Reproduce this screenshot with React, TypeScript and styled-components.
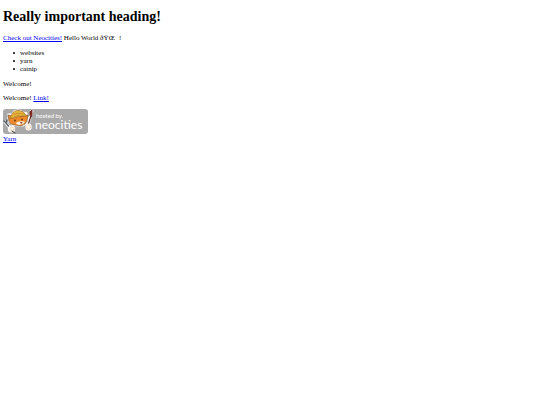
import React from 'react';
import styled, { createGlobalStyle } from 'styled-components';

const GlobalStyle = createGlobalStyle`
  body {
    margin: 0;
    background: #fff;
    color: #000;
    font: 7px/8px "Liberation Serif", "Times New Roman", serif;
  }
`;

const Page = styled.main`
  padding: 9px 3px;
`;

const Heading = styled.h1`
  margin: 0 0 9px;
  font-size: 14px;
  line-height: 16px;
`;

const Paragraph = styled.p`
  margin: 0 0 6px;
`;

const List = styled.ul`
  margin: 0 0 7px;
  padding-left: 10px;
  padding-top: 1px;
  list-style: none;
`;

const ListItem = styled.li`
  display: flex;
  align-items: center;
  gap: 5px;

  &::before {
    content: "";
    width: 2px;
    height: 2px;
    border-radius: 50%;
    background: #000;
  }
`;

const Link = styled.a`
  color: #0000ee;
  text-decoration: underline;
`;

const Blank = styled.span`
  display: inline-block;
  width: 4px;
`;

const BadgeLink = styled.a`
  display: block;
  width: 85px;
  margin: 7px 0 1px;
`;

const Badge = styled.svg`
  display: block;
  width: 100%;
  height: auto;
`;

const BadgeText = styled.text`
  fill: #fff;
  font-family: Lato, "Open Sans", sans-serif;
`;

function NeocitiesBadge() {
  return (
    <Badge viewBox="0 0 85 25" role="img" aria-label="Hosted by Neocities">
      <rect width="85" height="25" rx="3" fill="#a9a9a9" />
      <g strokeLinecap="round" strokeLinejoin="round">
        <path d="M5 10 5 5 9 5 11 2Q16 0 20 3L24 4 24 7 26 9 24 12 23 15 20 17 15 17 9 16 6 13Z" fill="#fff" stroke="#fff" strokeWidth="1.2" />
        <path d="M6 12 5 6 10 7 20 7 25 6 24 12 22 15 18 17 12 16 8 15Z" fill="#ed8b2b" stroke="#6e4423" strokeWidth=".6" />
        <path d="M7 9 9 5Q11 1 16 1.5 21 2 22 5L24 7 18 7 11 9Z" fill="#e5b43d" stroke="#936323" strokeWidth=".6" />
        <path d="M10 6Q14 3 21 5M11 8 16 6" fill="none" stroke="#b87e27" strokeWidth=".6" />
        <path d="M14 13 19 12 22 13 20 15 16 16 13 15Z" fill="#fff2df" />
        <path d="M17 13 20 13 18 15Z" fill="#943d2a" />
        <path d="M12 11 12 12M19 10 19 11" stroke="#382019" strokeWidth="1.2" />
        <path d="M2 13 8 20M29 2 25 16" stroke="#fff" strokeWidth="2.8" />
        <path d="M1 12 3 14 4 11M3 14 8 20" fill="none" stroke="#555b62" strokeWidth="1.3" />
        <path d="M28 7 25 16" stroke="#59342b" strokeWidth="1.3" />
        <path d="M27 6 27 3 29 1 29 6 28 8Z" fill="#a92924" stroke="#5e2a25" strokeWidth=".9" />
        <ellipse cx="8.5" cy="20" rx="3.7" ry="3.6" fill="#fff" />
        <ellipse cx="9" cy="20.3" rx="2.2" ry="2.2" fill="#fff8e8" stroke="#d5ab76" strokeWidth=".4" />
        <path d="M9 22 12 24" stroke="#343434" />
        <ellipse cx="25.5" cy="18" rx="3.2" ry="3.5" fill="#fff" />
        <ellipse cx="25.5" cy="18" rx="2" ry="2.5" fill="#fff8e8" stroke="#d5ab76" strokeWidth=".4" />
      </g>
      <BadgeText x="33" y="9" fontSize="6">hosted by.</BadgeText>
      <BadgeText x="32" y="20" fontSize="12">neocities</BadgeText>
    </Badge>
  );
}

export default function App() {
  return (
    <>
      <GlobalStyle />
      <Page>
        <Heading>Really important heading!</Heading>
        <Paragraph>
          <Link href="#neocities">Check out Neocities!</Link> Hello World ðŸŒ<Blank />!
        </Paragraph>
        <List>
          <ListItem>websites</ListItem>
          <ListItem>yarn</ListItem>
          <ListItem>catnip</ListItem>
        </List>
        <Paragraph>Welcome!</Paragraph>
        <Paragraph>Welcome! <Link href="#link">Link!</Link></Paragraph>
        <BadgeLink href="#hosted"><NeocitiesBadge /></BadgeLink>
        <Link href="#yarn">Yarn</Link>
      </Page>
    </>
  );
}
